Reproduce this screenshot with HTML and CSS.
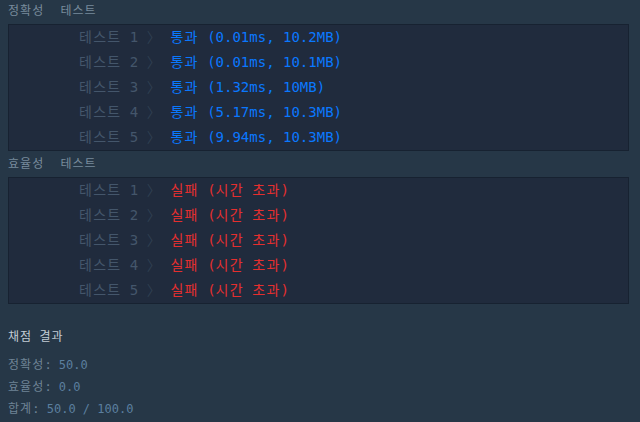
FILE: index.html
```html
<!DOCTYPE html>
<html lang="ko">
<head>
<meta charset="utf-8">
<link rel="stylesheet" href="styles.css">
</head>
<body>
<div class="page">
  <div class="section-title"><span class="ko">정확성</span><span class="ko">테스트</span></div>
  <div class="box">
    <div class="row"><span class="label"><span class="ko">테스트</span> 1</span> <span class="sep ko">〉</span> <span class="pass"><span class="ko">통과</span> (0.01ms, 10.2MB)</span></div>
    <div class="row"><span class="label"><span class="ko">테스트</span> 2</span> <span class="sep ko">〉</span> <span class="pass"><span class="ko">통과</span> (0.01ms, 10.1MB)</span></div>
    <div class="row"><span class="label"><span class="ko">테스트</span> 3</span> <span class="sep ko">〉</span> <span class="pass"><span class="ko">통과</span> (1.32ms, 10MB)</span></div>
    <div class="row"><span class="label"><span class="ko">테스트</span> 4</span> <span class="sep ko">〉</span> <span class="pass"><span class="ko">통과</span> (5.17ms, 10.3MB)</span></div>
    <div class="row"><span class="label"><span class="ko">테스트</span> 5</span> <span class="sep ko">〉</span> <span class="pass"><span class="ko">통과</span> (9.94ms, 10.3MB)</span></div>
  </div>
  <div class="section-title"><span class="ko">효율성</span><span class="ko">테스트</span></div>
  <div class="box">
    <div class="row"><span class="label"><span class="ko">테스트</span> 1</span> <span class="sep ko">〉</span> <span class="fail"><span class="ko">실패</span> (<span class="ko">시간</span> <span class="ko">초과</span>)</span></div>
    <div class="row"><span class="label"><span class="ko">테스트</span> 2</span> <span class="sep ko">〉</span> <span class="fail"><span class="ko">실패</span> (<span class="ko">시간</span> <span class="ko">초과</span>)</span></div>
    <div class="row"><span class="label"><span class="ko">테스트</span> 3</span> <span class="sep ko">〉</span> <span class="fail"><span class="ko">실패</span> (<span class="ko">시간</span> <span class="ko">초과</span>)</span></div>
    <div class="row"><span class="label"><span class="ko">테스트</span> 4</span> <span class="sep ko">〉</span> <span class="fail"><span class="ko">실패</span> (<span class="ko">시간</span> <span class="ko">초과</span>)</span></div>
    <div class="row"><span class="label"><span class="ko">테스트</span> 5</span> <span class="sep ko">〉</span> <span class="fail"><span class="ko">실패</span> (<span class="ko">시간</span> <span class="ko">초과</span>)</span></div>
  </div>
  <div class="summary">
    <div class="summary-title"><span class="ko">채점</span> <span class="ko">결과</span></div>
    <div class="summary-line"><span class="key"><span class="ko">정확성</span>:</span> <span class="val">50.0</span></div>
    <div class="summary-line"><span class="key"><span class="ko">효율성</span>:</span> <span class="val">0.0</span></div>
    <div class="summary-line"><span class="key"><span class="ko">합계</span>:</span> <span class="val">50.0 / 100.0</span></div>
  </div>
</div>
</body>
</html>
```
FILE: styles.css
```css
html, body {
  margin: 0;
  padding: 0;
  background: #263747;
}
body {
  font-family: "DejaVu Sans Mono", "Noto Sans CJK KR", monospace;
  height: 422px;
  overflow: hidden;
}
.page {
  margin: -2px 11px 0 8px;
}
.ko {
  letter-spacing: 0.09em;
}
.section-title {
  display: flex;
  gap: 16px;
  font-size: 12px;
  line-height: 26px;
  height: 26px;
  color: #788b9c;
}
.box {
  background: #202b3d;
  border: 1px solid #172231;
  padding: 0;
}
.row {
  height: 25px;
  line-height: 25px;
  font-size: 14px;
  padding-left: 70px;
  white-space: pre;
}
.label {
  color: #44566b;
}
.sep {
  color: #2f3f51;
}
.pass {
  color: #0a78ff;
}
.fail {
  color: #e52f2f;
}
.summary {
  padding-top: 24px;
}
.summary-title {
  font-size: 12px;
  line-height: 18px;
  color: #c3ccd5;
  margin-bottom: 8px;
}
.summary-line {
  font-size: 12px;
  line-height: 22px;
  white-space: pre;
}
.key {
  color: #6f8496;
}
.val {
  color: #5b7f9f;
}
```
